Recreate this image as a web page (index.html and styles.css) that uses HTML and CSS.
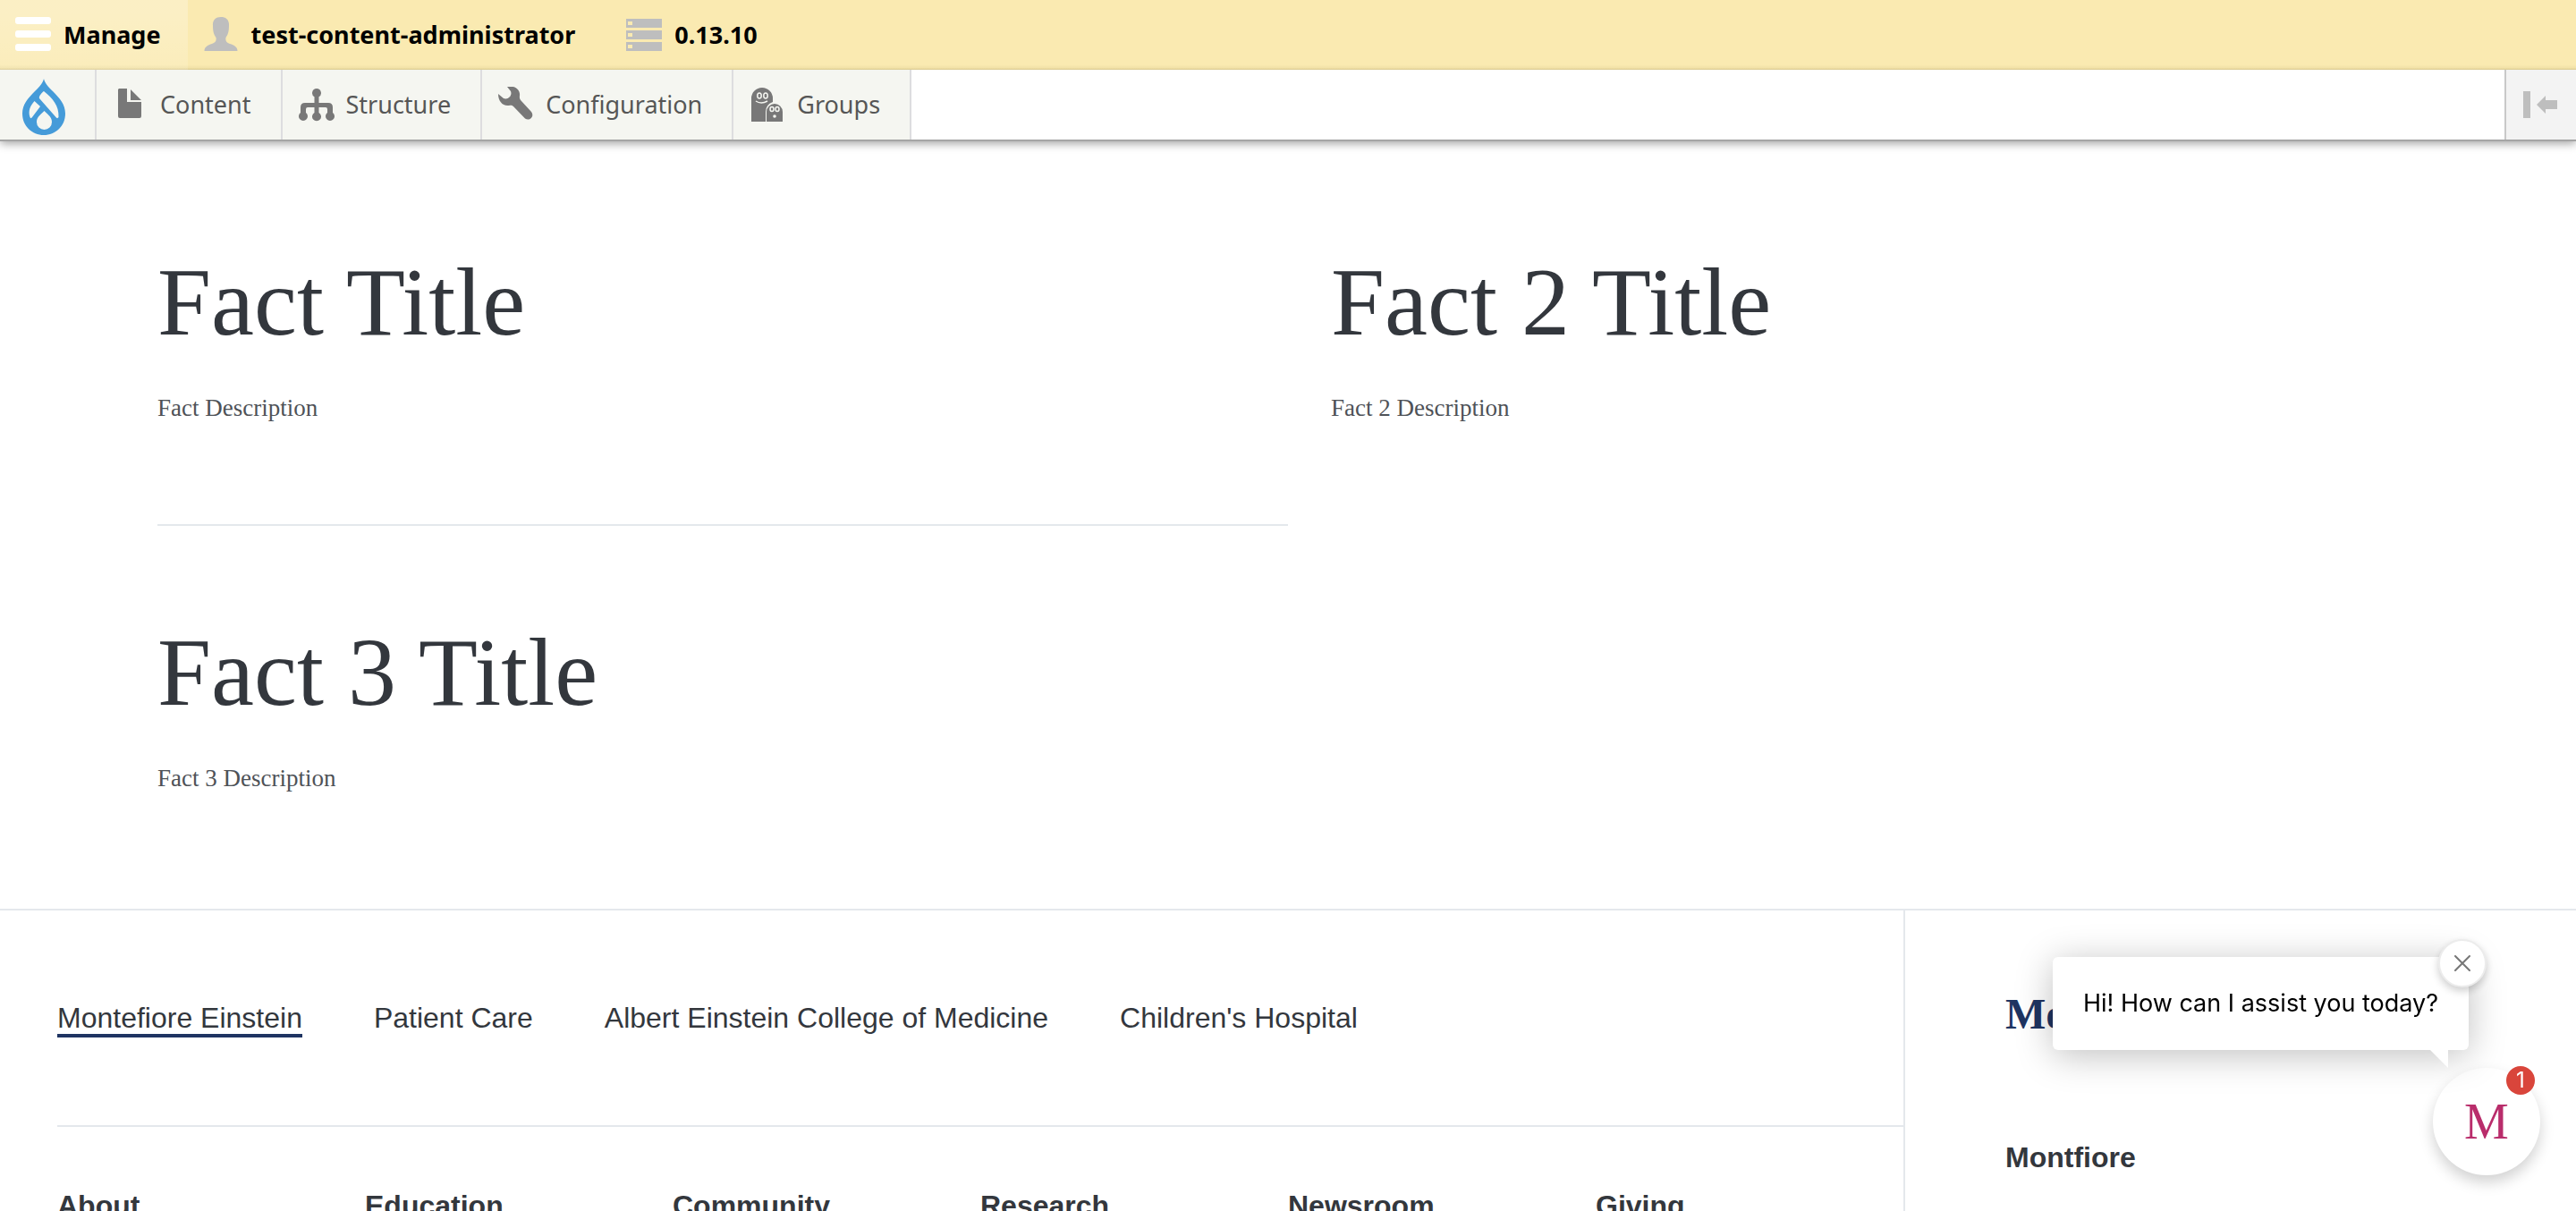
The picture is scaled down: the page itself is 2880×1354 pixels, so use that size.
FILE: index.html
```html
<!DOCTYPE html>
<html lang="en">
<head>
<meta charset="utf-8">
<title>Facts | Montefiore Einstein</title>
<link rel="stylesheet" href="styles.css">
</head>
<body>
<header class="toolbar">
  <nav class="bar" aria-label="Toolbar items">
    <a class="tab tab-active" href="#manage">
      <svg class="tab-icon" viewBox="0 0 40 40" fill="#fff"><rect y="0" width="40" height="8" rx="3"/><rect y="15" width="40" height="8" rx="3"/><rect y="30" width="40" height="8" rx="3"/></svg>
      Manage</a>
    <a class="tab" href="#user">
      <svg class="tab-icon" viewBox="0 0 40 40" fill="#bebebe"><path d="M20 0c6 0 9.500 3.500 9 10 0 7-1.500 10-3.500 13-.8 4 1 5.500 4.500 7 5 1.500 8.500 3.500 8.500 8h-37c0-4.500 3.500-6.500 8.500-8 3.500-1.500 5.300-3 4.500-7-2-3-3.500-6-3.500-13C10.500 3.500 14 0 20 0z"/></svg>
      test-content-administrator</a>
    <a class="tab" href="#version">
      <svg class="tab-icon" viewBox="0 0 40 40" fill="#bebebe" fill-rule="evenodd"><path d="M0 2h40v10H0zM2 5v4h5V5zM0 15h40v10H0zM2 18v4h5v-4zM0 28h40v10H0zM2 31v4h5v-4z"/></svg>
      0.13.10</a>
  </nav>
  <nav class="tray" aria-label="Administration menu">
    <a class="home" href="#home" aria-label="Home">
      <svg class="home-icon" viewBox="0 0 48 64"><path fill="#459bd9" d="M24 0c1 5 5 9 10 14 8 8 14 15 14 25 0 14-11 24-24 24S0 53 0 39c0-10 6-17 14-25C19 9 23 5 24 0z"/><path fill="#f5f6f1" d="M24 14c10 8 17 16 16.500 29-1 1.500-2 1.500-3 0L19 22c-1-2 3-7 5-8zM13.500 25l6.500 6-9 12c-1 1.500-2 1.500-2.500 0C6 36 9 30 13.500 25zM24.500 36c5 5 8.500 7 8.500 12.500a8.500 8.500 0 0 1-17 0c0-5.500 3.500-7.500 8.500-12.500z"/></svg>
    </a>
    <a class="item" href="#content"><svg class="item-icon" viewBox="0 0 40 40" fill="#787878"><path d="M7 2h9v15h16v16a2 2 0 0 1-2 2H8a2 2 0 0 1-2-2V3zM20 3l12 12H20z"/></svg>Content</a>
    <a class="item" href="#structure"><svg class="item-icon" viewBox="0 0 40 40" fill="#787878"><path d="M20 2a5 5 0 0 1 2.500 9.300V18H33q5 0 5 5v6a5 5 0 1 1-6 0v-4q0-2-2-2h-7.500v6a5 5 0 1 1-5 0v-6H10q-2 0-2 2v4a5 5 0 1 1-6 0v-6q0-5 5-5h10.500v-6.700A5 5 0 0 1 20 2z"/></svg>Structure</a>
    <a class="item" href="#configuration"><svg class="item-icon" viewBox="0 0 40 40" fill="#787878"><path d="M10 0c8-2 15 3 14 10-.3 2 0 4 1.500 5.500L37 28c4 5-2 11-7 7.500L17 22c-1.500-1.500-3-1.300-5-1C5 22 0 16 0 8l6 5c5 2 10-3 8-8z"/></svg>Configuration</a>
    <a class="item" href="#groups"><svg class="item-icon" viewBox="0 0 40 40"><path fill="#787878" d="M2 39V13a12 12 0 0 1 24 0v4q-8 3-8 11v11zM19 39V28a9 9 0 0 1 18 0v11z"/><g fill="none" stroke="#f5f6f1" stroke-width="1.500"><ellipse cx="11" cy="10" rx="2.200" ry="3"/><ellipse cx="18" cy="10" rx="2.200" ry="3"/><ellipse cx="25" cy="25" rx="2" ry="2.500"/><ellipse cx="31" cy="25" rx="2" ry="2.500"/><path d="M7 16q6 4 13 0"/></g><circle cx="28" cy="33" r="1.800" fill="#f5f6f1"/></svg>Groups</a>
    <button class="orient" type="button" aria-label="Vertical orientation">
      <svg class="orient-icon" viewBox="0 0 40 32" fill="#bebebe"><path d="M0 1h8v30H0zM15 16L25 6v5h13v10H25v5z"/></svg>
    </button>
  </nav>
</header>
<main class="facts">
  <article class="fact"><h2 class="fact-title">Fact Title</h2><p class="fact-text">Fact Description</p></article>
  <article class="fact"><h2 class="fact-title">Fact 2 Title</h2><p class="fact-text">Fact 2 Description</p></article>
  <article class="fact"><h2 class="fact-title">Fact 3 Title</h2><p class="fact-text">Fact 3 Description</p></article>
</main>
<footer class="footer">
  <div class="footer-main">
    <nav class="sites" aria-label="Sites">
      <a class="site site-active" href="#montefiore-einstein">Montefiore Einstein</a>
      <a class="site" href="#patient-care">Patient Care</a>
      <a class="site" href="#college">Albert Einstein College of Medicine</a>
      <a class="site" href="#children">Children's Hospital</a>
    </nav>
    <div class="sections">
      <h3 class="heading">About</h3>
      <h3 class="heading">Education</h3>
      <h3 class="heading">Community</h3>
      <h3 class="heading">Research</h3>
      <h3 class="heading">Newsroom</h3>
      <h3 class="heading">Giving</h3>
    </div>
  </div>
  <div class="footer-side">
    <a class="brand" href="#home">Montefiore</a>
    <h3 class="heading">Montfiore</h3>
  </div>
</footer>
<aside class="chat" aria-label="Chat">
  <button class="launcher" type="button" aria-label="Open chat">M<span class="badge">1</span></button>
  <div class="bubble">
    Hi! How can I assist you today?
    <svg class="tail" viewBox="0 0 20 20" fill="#fff"><path d="M0 0h20v20z"/></svg>
    <button class="close" type="button" aria-label="Close"><svg class="close-icon" viewBox="0 0 18 18" stroke="#777" stroke-width="2" stroke-linecap="round"><path d="M1 1l16 16M17 1L1 17"/></svg></button>
  </div>
</aside>
</body>
</html>
```
FILE: styles.css
```css
* { box-sizing: border-box; }
body {
  margin: 0;
  height: 100vh;
  overflow: hidden;
  background: #fff;
  color: #33373d;
  font-family: "Liberation Sans", Arial, sans-serif;
}
a { color: inherit; text-decoration: none; }
button { border: 0; padding: 0; cursor: pointer; }
svg { display: block; flex: none; }
h2, h3, p { margin: 0; }

.toolbar {
  position: relative;
  font: 27px/34px "Noto Sans", "Open Sans", sans-serif;
  box-shadow: 0 2px 0 #a5a5a5, 0 4px 10px rgba(0, 0, 0, .4);
}
.bar {
  display: flex;
  height: 78px;
  background: linear-gradient(#faeab1 72px, #f2e2a8 76px, #d8c98f);
}
.tab {
  display: flex;
  align-items: center;
  gap: 14px;
  padding: 0 40px 0 17px;
  color: #000;
  font-weight: 700;
}
.tab-active {
  padding-right: 30px;
  background: linear-gradient(rgba(255, 255, 255, .25) 20%, rgba(255, 255, 255, .13));
}
.tab-icon { width: 40px; height: 40px; }
.tray { display: flex; height: 78px; background: #fff; }
.home, .item {
  display: flex;
  align-items: center;
  border-right: 2px solid #dddddf;
  background: #f5f6f1;
  color: #565656;
}
.home { width: 108px; padding: 6px 0 0 25px; }
.home-icon { width: 48px; height: 64px; }
.item { gap: 13px; padding: 0 33px 0 18px; }
.item-icon { width: 40px; height: 40px; }
.orient {
  margin-left: auto;
  width: 80px;
  padding-left: 19px;
  border-left: 2px solid #c8c8c8;
  background: #f3f3f3;
}
.orient-icon { width: 40px; height: 32px; }

.facts {
  display: grid;
  grid-template-columns: 1fr 1fr;
  padding: 18px 176px 14px;
  font-family: "Liberation Serif", "Times New Roman", serif;
}
.fact { height: 414px; padding-top: 104px; }
.fact:first-child { border-bottom: 2px solid #e4e8ec; }
.fact:nth-child(even) { padding-left: 48px; }
.fact-title { font-size: 108px; line-height: 120px; font-weight: 400; }
.fact-text { margin-top: 38px; color: #4e5257; font-size: 27px; line-height: 40px; }

.footer {
  display: grid;
  grid-template-columns: 2128fr 752fr;
  border-top: 2px solid #e4e8ec;
}
.footer-main { min-width: 0; padding-left: 64px; }
.sites {
  display: flex;
  gap: 80px;
  padding: 102px 0 98px;
  border-bottom: 2px solid #e4e8ec;
  font-size: 32px;
  line-height: 36px;
}
.site { border-bottom: 4px solid transparent; }
.site-active { border-color: #1f3462; }
.sections { display: grid; grid-template-columns: repeat(6, 1fr); padding-top: 68px; }
.heading { font-size: 32px; line-height: 40px; font-weight: 700; }
.footer-side { padding: 86px 112px 0; border-left: 2px solid #e4e8ec; }
.brand {
  display: block;
  margin-bottom: 110px;
  color: #1f3462;
  font: 700 48px/60px "Liberation Serif", serif;
}

.chat { position: fixed; right: 40px; bottom: 40px; }
.bubble {
  position: absolute;
  right: 80px;
  bottom: 140px;
  padding: 34px;
  border-radius: 6px;
  background: #fff;
  box-shadow: 0 6px 40px rgba(0, 0, 0, .25);
  color: #000;
  font: 27px/36px Inter, sans-serif;
  white-space: nowrap;
}
.tail { position: absolute; right: 23px; top: 100%; width: 20px; height: 20px; }
.close {
  position: absolute;
  top: -20px;
  right: -20px;
  display: grid;
  place-items: center;
  width: 54px;
  height: 54px;
  border: 2px solid #ececec;
  border-radius: 50%;
  background: #fff;
  box-shadow: 0 4px 10px rgba(0, 0, 0, .2);
}
.close-icon { width: 18px; height: 18px; }
.launcher {
  display: block;
  width: 120px;
  height: 120px;
  border-radius: 50%;
  background: #fff;
  box-shadow: 0 8px 16px rgba(0, 0, 0, .18);
  color: #b92d6b;
  font: 56px/120px "Liberation Serif", serif;
}
.badge {
  position: absolute;
  top: -2px;
  right: 6px;
  width: 32px;
  height: 32px;
  border-radius: 50%;
  background: #d9453b;
  color: #fff;
  font: 24px/32px Inter, sans-serif;
}
```
